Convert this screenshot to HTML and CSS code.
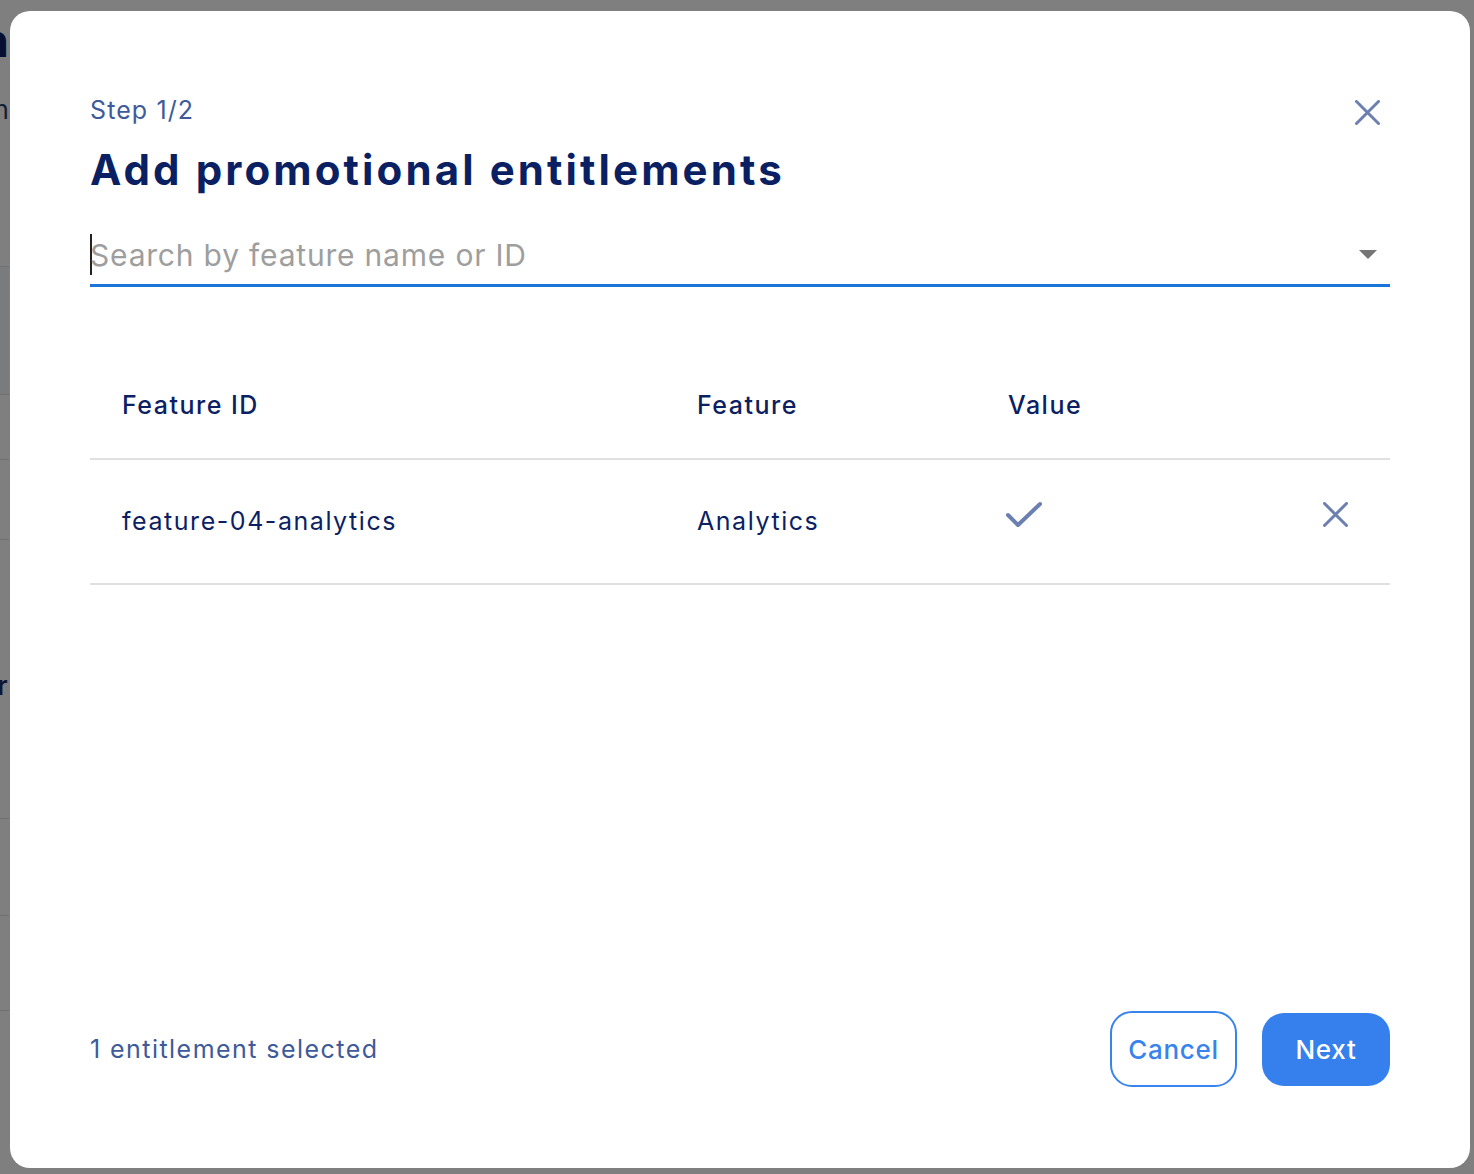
FILE: index.html
```html
<!DOCTYPE html>
<html>
  <head>
    <title>Add promotional entitlements</title>
    <meta name="viewport" content="width=device-width, initial-scale=1.0" />
    <link rel="stylesheet" href="styles.css">
  </head>
  <body>
    <!-- Page behind the dialog (only a sliver shows) -->
    <div class="page">
      <div class="page-edge">
        <div class="edge-title">Promotion</div>
        <div class="edge-sub">Search</div>
        <div class="edge-row edge-a"></div>
        <div class="edge-row edge-b"></div>
        <div class="edge-row edge-c"></div>
        <div class="edge-row edge-d"></div>
        <div class="edge-text">Offer</div>
        <div class="edge-row edge-e"></div>
        <div class="edge-row edge-f"></div>
        <div class="edge-row edge-g"></div>
      </div>
    </div>

    <div class="overlay">
      <div class="modal">
        <div class="modal-header">
          <div class="heading">
            <div class="step">Step 1/2</div>
            <h1>Add promotional entitlements</h1>
          </div>
          <button class="close-btn" aria-label="Close">
            <svg width="25" height="25" viewBox="0 0 25 25">
              <path d="M1.5 1.5L23.5 23.5M23.5 1.5L1.5 23.5" stroke="#6b7fb0" stroke-width="3" stroke-linecap="round" fill="none" />
            </svg>
          </button>
        </div>

        <div class="search-field">
          <span class="caret"></span>
          <input type="text" placeholder="Search by feature name or ID" />
          <span class="arrow"></span>
        </div>

        <table class="entitlements">
          <colgroup>
            <col class="col-id" />
            <col class="col-feature" />
            <col />
            <col class="col-action" />
          </colgroup>
          <thead>
            <tr>
              <th>Feature ID</th>
              <th>Feature</th>
              <th>Value</th>
              <th></th>
            </tr>
          </thead>
          <tbody>
            <tr>
              <td>feature-04-analytics</td>
              <td>Analytics</td>
              <td>
                <svg class="check" width="40" height="30" viewBox="0 0 40 30">
                  <path d="M4 17L14 27L36 6" stroke="#6b7fb0" stroke-width="4" stroke-linecap="round" stroke-linejoin="round" fill="none" />
                </svg>
              </td>
              <td class="action">
                <svg class="remove" width="25" height="25" viewBox="0 0 25 25">
                  <path d="M1.5 1.5L23.5 23.5M23.5 1.5L1.5 23.5" stroke="#6b7fb0" stroke-width="3" stroke-linecap="round" fill="none" />
                </svg>
              </td>
            </tr>
          </tbody>
        </table>

        <div class="modal-footer">
          <span class="selected-count">1 entitlement selected</span>
          <div class="actions">
            <button class="btn btn-outline">Cancel</button>
            <button class="btn btn-primary">Next</button>
          </div>
        </div>
      </div>
    </div>
  </body>
</html>
```

FILE: styles.css
```css
body {
  margin: 0;
  font-family: Inter, "Noto Sans", sans-serif;
  background-color: #fff;
  color: #0c1f62;
  overflow: hidden;
}

/* background page */
.page {
  height: 1174px;
}

.page-edge {
  width: 9px;
  overflow: hidden;
  white-space: nowrap;
  direction: rtl;
  padding-top: 5px;
}

.edge-title {
  font-size: 46px;
  font-weight: 700;
  line-height: 70px;
  height: 70px;
}

.edge-sub {
  margin-top: 19px;
  font-size: 26px;
  line-height: 32px;
  color: #2c3e6a;
}

.edge-row {
  border-bottom: 1px solid #e0e0e0;
}

.edge-a { height: 140px; }
.edge-b { height: 127px; background-color: #f4f6fb; }
.edge-c { height: 64px; }
.edge-d { height: 79px; }

.edge-text {
  margin-top: 130px;
  font-size: 26px;
  font-weight: 600;
  line-height: 32px;
  color: #1a2c6a;
  letter-spacing: 1.5px;
}

.edge-e { height: 116px; }
.edge-f { height: 96px; }
.edge-g { height: 94px; }

/* dialog */
.overlay {
  position: fixed;
  top: 0;
  left: 0;
  right: 0;
  bottom: 0;
  background-color: rgba(0, 0, 0, 0.5);
  display: flex;
  padding: 11px 4px 6px 10px;
}

.modal {
  flex: 1;
  background-color: #fff;
  border-radius: 20px;
  padding: 82px 80px 81px;
  display: flex;
  flex-direction: column;
}

.modal-header {
  display: flex;
  justify-content: space-between;
  align-items: flex-start;
}

.step {
  font-size: 25px;
  line-height: 32px;
  color: #3e5a9a;
  margin-top: 1px;
  letter-spacing: 1.1px;
}

h1 {
  margin: 18px 0 0;
  font-size: 42px;
  line-height: 52px;
  font-weight: 700;
  color: #0b1f63;
  letter-spacing: 3.1px;
}

.close-btn {
  background: none;
  border: none;
  padding: 0;
  margin: 7px 10px 0 0;
  cursor: pointer;
}

.close-btn svg {
  display: block;
}

.search-field {
  margin-top: 30px;
  display: flex;
  align-items: center;
  padding: 8px 0 9px;
  border-bottom: 3px solid #1b74d8;
}

.caret {
  width: 2px;
  height: 41px;
  background-color: #222;
  margin-right: -2px;
}

.search-field input {
  flex: 1;
  border: none;
  outline: none;
  padding: 0;
  font-family: Inter, "Noto Sans", sans-serif;
  font-size: 30px;
  line-height: 40px;
  height: 40px;
  letter-spacing: 0.8px;
  color: #0c1f62;
  background: transparent;
}

.search-field input::placeholder {
  color: #9e9e9e;
}

.arrow {
  width: 0;
  height: 0;
  border-left: 9.5px solid transparent;
  border-right: 9.5px solid transparent;
  border-top: 9px solid #757575;
  margin-right: 13px;
}

/* table */
.entitlements {
  margin-top: 48px;
  width: 100%;
  border-collapse: collapse;
  table-layout: fixed;
}

.col-id { width: 575px; }
.col-feature { width: 311px; }
.col-action { width: 100px; }

.entitlements th {
  text-align: left;
  font-size: 25px;
  font-weight: 500;
  line-height: 30px;
  letter-spacing: 1.5px;
  padding: 55px 32px 38px;
  border-bottom: 2px solid #e0e0e0;
}

.entitlements td {
  font-size: 25px;
  line-height: 30px;
  letter-spacing: 1.55px;
  padding: 46px 32px 47px;
  border-bottom: 2px solid #e0e0e0;
  vertical-align: top;
}

.check {
  display: block;
  margin: -8px 0 0 -4px;
}

.entitlements td.action {
  padding-right: 42px;
}

.remove {
  display: block;
  margin: -4px 0 0 auto;
}

/* footer */
.modal-footer {
  margin-top: auto;
  display: flex;
  justify-content: space-between;
  align-items: center;
}

.selected-count {
  font-size: 25px;
  line-height: 32px;
  letter-spacing: 1.45px;
  color: #3e5a9a;
}

.actions {
  display: flex;
  align-items: center;
  gap: 25px;
}

.btn {
  font-family: Inter, "Noto Sans", sans-serif;
  font-size: 26px;
  font-weight: 500;
  letter-spacing: 0.7px;
  border-radius: 22px;
  cursor: pointer;
  padding: 0;
}

.btn-outline {
  width: 127px;
  height: 76px;
  background-color: #fff;
  border: 2px solid #3883ee;
  color: #3883ee;
}

.btn-primary {
  width: 128px;
  height: 73px;
  background-color: #3580ed;
  border: none;
  color: #fff;
}
```
